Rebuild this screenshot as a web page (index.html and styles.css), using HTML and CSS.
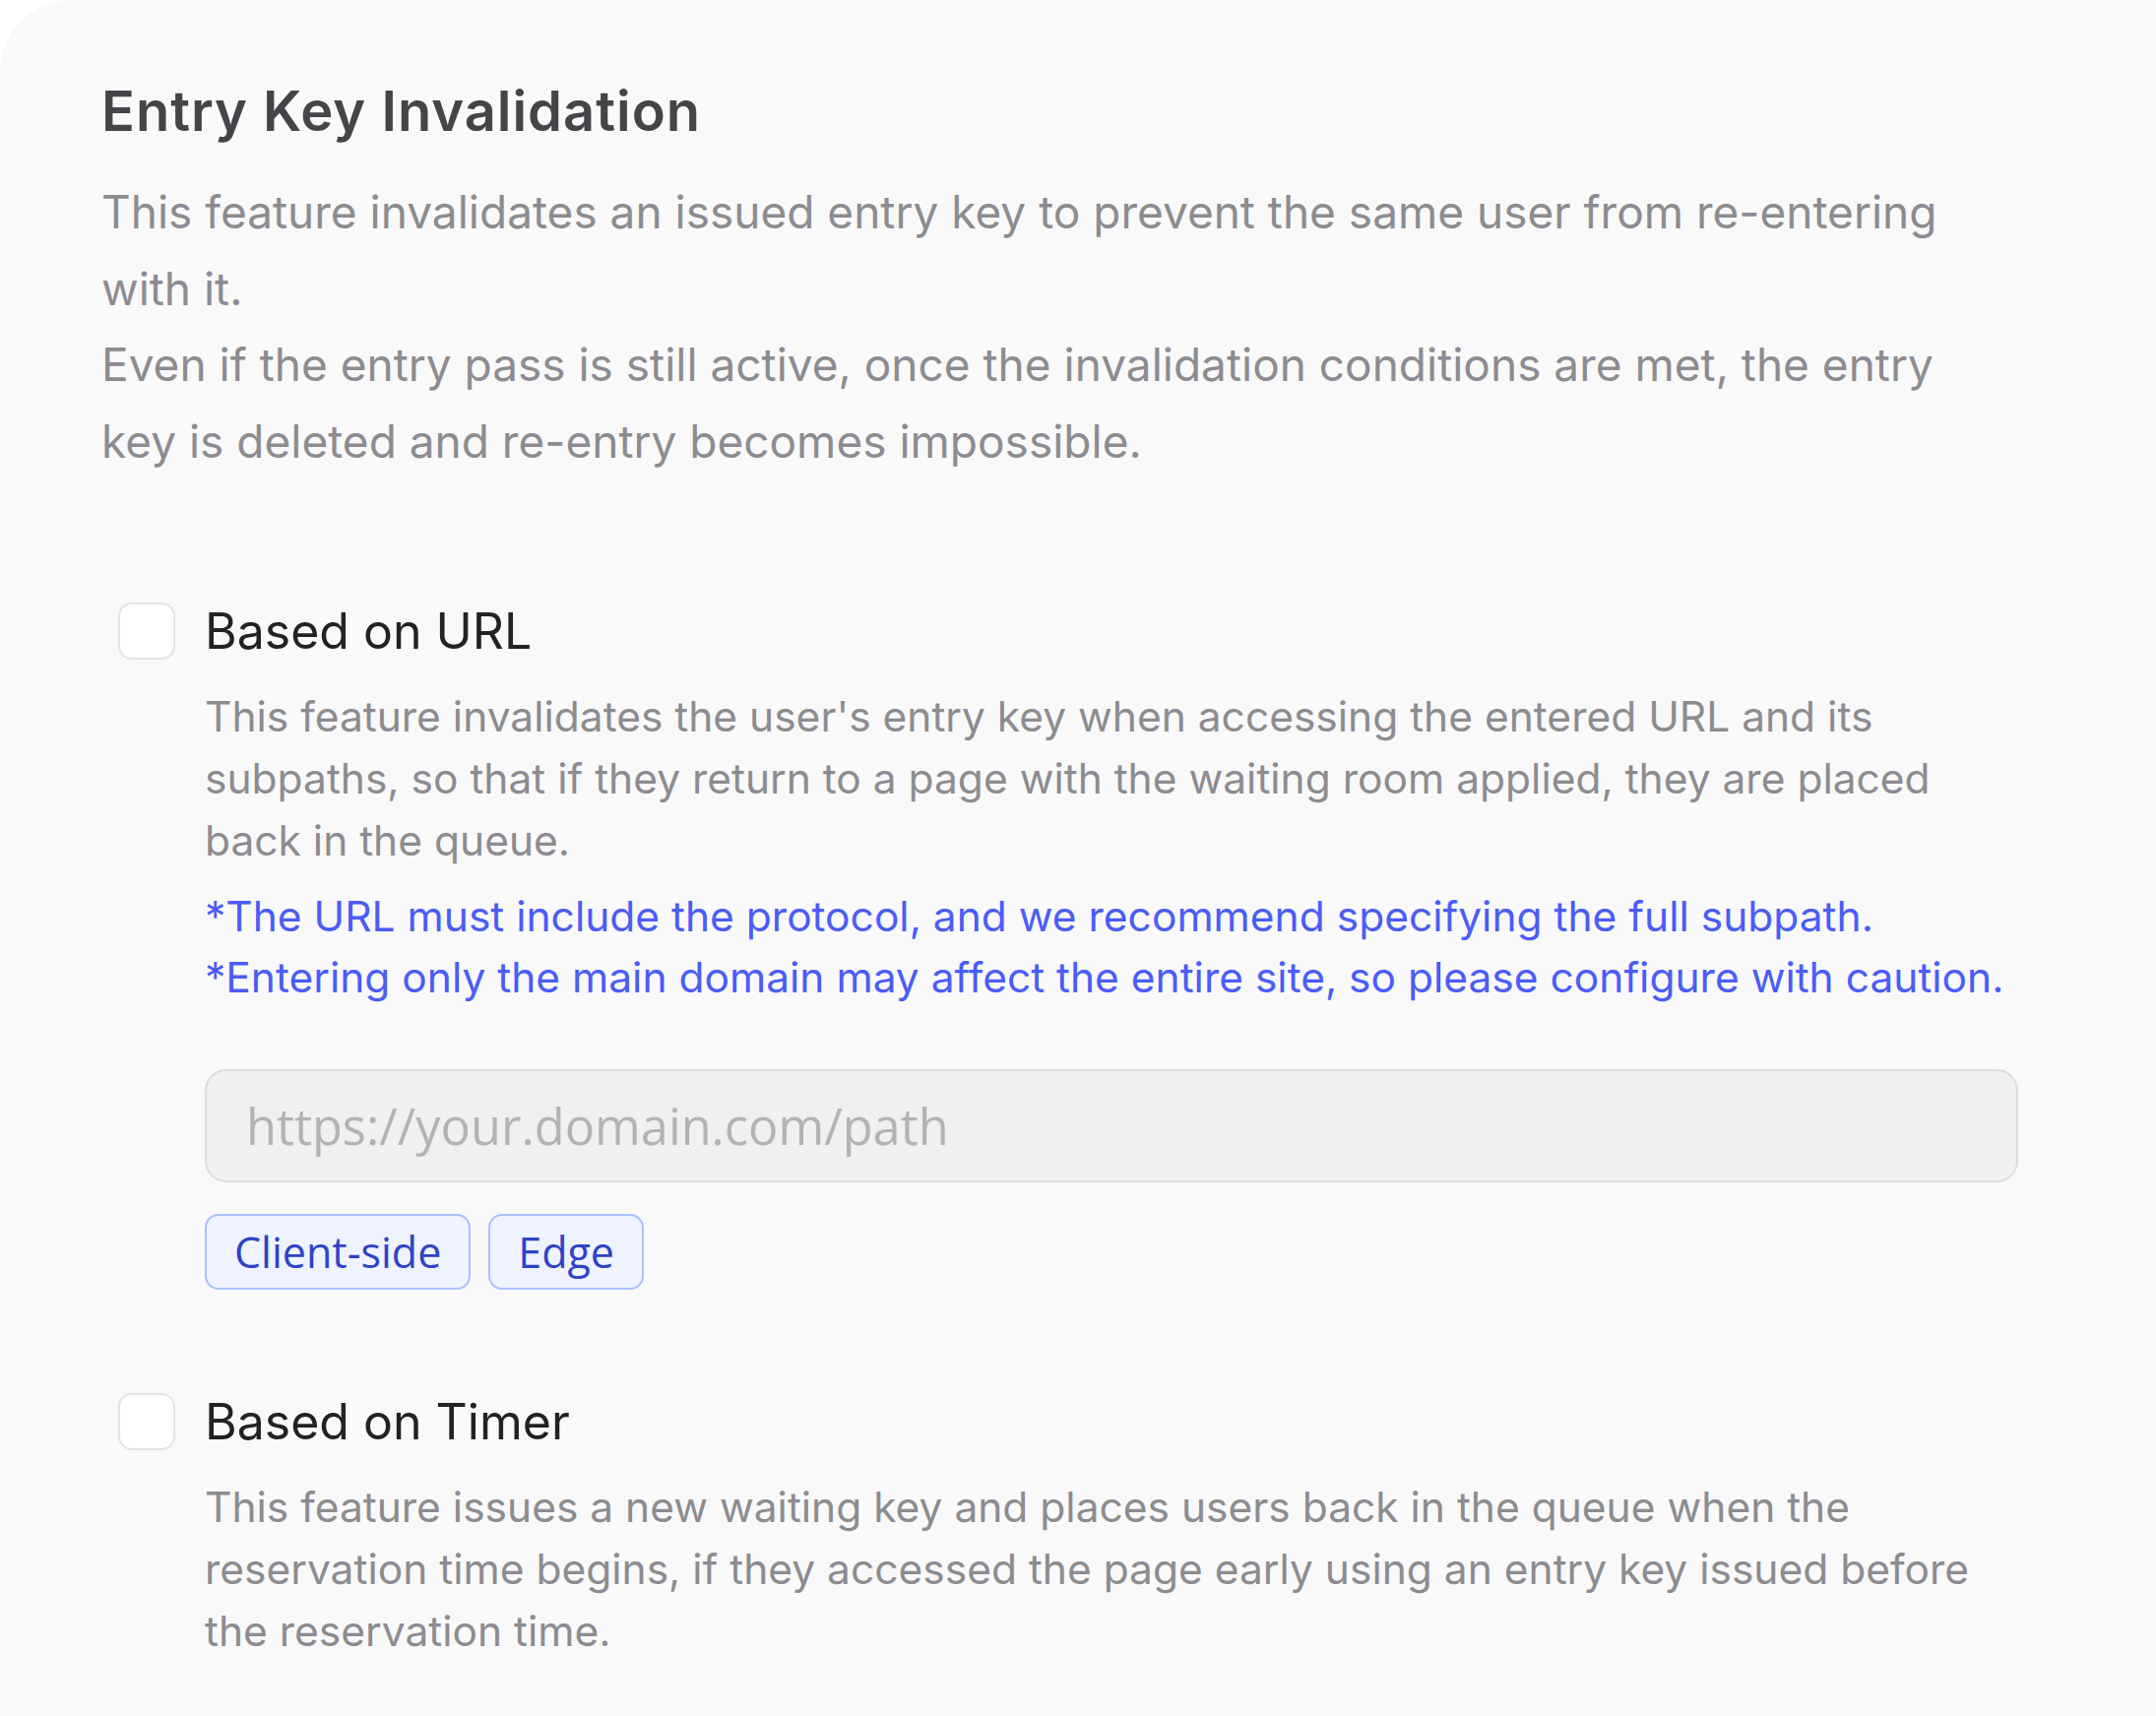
FILE: index.html
```html
<!DOCTYPE html>
<html lang="en">
<head>
<meta charset="utf-8">
<title>Entry Key Invalidation</title>
<link rel="stylesheet" href="styles.css">
</head>
<body>
<section class="card">
  <h1 class="title">Entry Key Invalidation</h1>
  <p class="intro">This feature invalidates an issued entry key to prevent the same user from re-entering with it.<br>Even if the entry pass is still active, once the invalidation conditions are met, the entry key is deleted and re-entry becomes impossible.</p>

  <div class="option option-url">
    <label class="option-head">
      <span class="checkbox"></span>
      <span class="option-label">Based on URL</span>
    </label>
    <div class="option-body">
      <p class="option-desc">This feature invalidates the user's entry key when accessing the entered URL and its subpaths, so that if they return to a page with the waiting room applied, they are placed back in the queue.</p>
      <p class="notice">*The URL must include the protocol, and we recommend specifying the full subpath.<br>*Entering only the main domain may affect the entire site, so please configure with caution.</p>
      <input class="url-input" type="text" placeholder="https://your.domain.com/path">
      <div class="tags">
        <span class="tag">Client-side</span>
        <span class="tag">Edge</span>
      </div>
    </div>
  </div>

  <div class="option option-timer">
    <label class="option-head">
      <span class="checkbox"></span>
      <span class="option-label">Based on Timer</span>
    </label>
    <div class="option-body">
      <p class="option-desc">This feature issues a new waiting key and places users back in the queue when the reservation time begins, if they accessed the page early using an entry key issued before the reservation time.</p>
    </div>
  </div>
</section>
</body>
</html>
```

FILE: styles.css
```css
html, body {
  margin: 0;
  padding: 0;
  background: #ffffff;
}

body {
  font-family: Inter, "Noto Sans", sans-serif;
}

.card {
  background: #f9f9f9;
  border-top-left-radius: 72px;
  min-height: 100vh;
  box-sizing: border-box;
  padding: 81px 140px 80px 103px;
}

.title {
  margin: 0;
  font-size: 56px;
  line-height: 64px;
  font-weight: 600;
  letter-spacing: 1px;
  color: #444549;
}

.intro {
  margin: 32px 24px 0 0;
  font-size: 46px;
  line-height: 77.5px;
  color: #8c8c90;
}

.option {
  padding-left: 17px;
}

.option-url {
  margin-top: 119px;
}

.option-timer {
  margin-top: 99px;
}

.option-head {
  display: flex;
  align-items: center;
  gap: 30px;
}

.checkbox {
  flex: none;
  width: 58px;
  height: 58px;
  box-sizing: border-box;
  border: 2px solid #e4e4e4;
  border-radius: 14px;
  background: #ffffff;
}

.option-label {
  font-size: 50px;
  line-height: 70px;
  color: #222222;
}

.option-body {
  padding-left: 88px;
  padding-top: 20px;
}

.option-desc {
  margin: 0;
  font-size: 42.5px;
  line-height: 63px;
  color: #8c8c90;
}

.notice {
  margin: 14.5px 0 0;
  font-size: 42.5px;
  line-height: 62px;
  color: #4a5df7;
}

.url-input {
  display: block;
  box-sizing: border-box;
  width: 100%;
  height: 115px;
  margin-top: 62.5px;
  padding: 0 40px;
  border: 2px solid #dcdcdc;
  border-radius: 22px;
  background: #f0f0f0;
  font-family: "Open Sans", "Noto Sans", sans-serif;
  font-size: 50.5px;
  color: #333333;
  outline: none;
}

.url-input::placeholder {
  color: #b3b3b3;
}

.tags {
  display: flex;
  gap: 18px;
  margin-top: 32px;
}

.tag {
  display: inline-flex;
  align-items: center;
  box-sizing: border-box;
  height: 77px;
  padding: 0 28px;
  border: 2px solid #a9c1fb;
  border-radius: 14px;
  background: #eef3ff;
  font-family: "Open Sans", "Noto Sans", sans-serif;
  font-size: 43px;
  color: #2d44c6;
}
```
